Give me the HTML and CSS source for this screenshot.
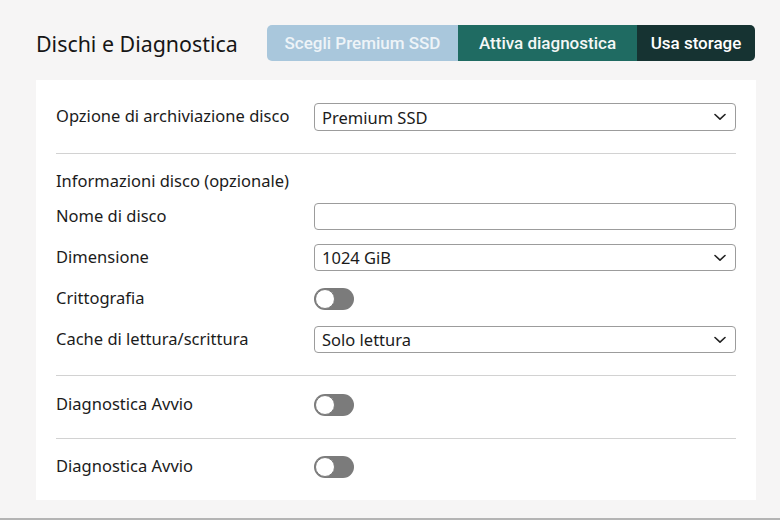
FILE: index.html
```html
<!DOCTYPE html>
<html lang="it">
<head>
<meta charset="utf-8">
<title>Dischi e Diagnostica</title>
<link rel="stylesheet" href="styles.css">
</head>
<body>
<div class="page">
  <header class="header">
    <h1 class="title">Dischi e Diagnostica</h1>
    <div class="steps">
      <span class="step step-1">Scegli Premium SSD</span>
      <span class="step step-2">Attiva diagnostica</span>
      <span class="step step-3">Usa storage</span>
    </div>
  </header>

  <main class="card">
    <section class="section section-first">
      <div class="row">
        <span class="label">Opzione di archiviazione disco</span>
        <div class="select"><span>Premium SSD</span><svg class="chev" viewBox="0 0 12 8" width="12" height="8"><path d="M1 1.5 6 6.2 11 1.5" fill="none" stroke="#222" stroke-width="1.6" stroke-linecap="round" stroke-linejoin="round"/></svg></div>
      </div>
    </section>

    <section class="section section-info">
      <div class="heading">Informazioni disco (opzionale)</div>
      <div class="rows">
        <div class="row">
          <span class="label">Nome di disco</span>
          <div class="input"></div>
        </div>
        <div class="row">
          <span class="label">Dimensione</span>
          <div class="select"><span>1024 GiB</span><svg class="chev" viewBox="0 0 12 8" width="12" height="8"><path d="M1 1.5 6 6.2 11 1.5" fill="none" stroke="#222" stroke-width="1.6" stroke-linecap="round" stroke-linejoin="round"/></svg></div>
        </div>
        <div class="row">
          <span class="label">Crittografia</span>
          <div class="ctl"><span class="toggle"><span class="knob"></span></span></div>
        </div>
        <div class="row">
          <span class="label">Cache di lettura/scrittura</span>
          <div class="select"><span>Solo lettura</span><svg class="chev" viewBox="0 0 12 8" width="12" height="8"><path d="M1 1.5 6 6.2 11 1.5" fill="none" stroke="#222" stroke-width="1.6" stroke-linecap="round" stroke-linejoin="round"/></svg></div>
        </div>
      </div>
    </section>

    <section class="section section-diag">
      <div class="row">
        <span class="label">Diagnostica Avvio</span>
        <div class="ctl"><span class="toggle"><span class="knob"></span></span></div>
      </div>
    </section>

    <section class="section section-last">
      <div class="row">
        <span class="label">Diagnostica Avvio</span>
        <div class="ctl"><span class="toggle"><span class="knob"></span></span></div>
      </div>
    </section>
  </main>
  <div class="footer-line"></div>
</div>
</body>
</html>
```

FILE: styles.css
```css
* { box-sizing: border-box; }
html, body { margin: 0; padding: 0; }
body {
  background: #f6f5f5;
  font-family: "Noto Sans", "Open Sans", sans-serif;
  color: #1b1b1b;
  width: 780px;
  height: 520px;
  overflow: hidden;
}
.page { padding-top: 25px; }
.header {
  display: flex;
  align-items: center;
  justify-content: space-between;
  padding: 0 25px 0 36px;
  height: 36px;
}
.title {
  margin: 0;
  font-size: 21.4px;
  font-weight: 400;
  color: #161616;
}
.steps {
  display: flex;
  height: 36px;
  border-radius: 5px;
  overflow: hidden;
  font-family: Roboto, "Noto Sans", sans-serif;
  font-weight: 500;
  font-size: 17px;
}
.step {
  display: flex;
  align-items: center;
  justify-content: center;
}
.step-1 { width: 191px; background: #a9c7dc; color: #eef4f8; }
.step-2 { width: 179px; background: #1f6b62; color: #f4f7f6; }
.step-3 { width: 118px; background: #163332; color: #ffffff; }

.card {
  margin: 19px 24px 0 36px;
  background: #ffffff;
  padding: 0 20px;
  height: 420px;
}
.section { border-top: 1px solid #d2d2d2; }
.section-first { border-top: none; padding: 23px 0 22px; }
.section-info { padding: 16px 0 22px; }
.section-diag { padding: 15px 0 20px; }
.section-last { padding: 14px 0 0; }

.heading {
  font-size: 16.5px;
  line-height: 22px;
  margin-bottom: 11px;
}
.rows { display: flex; flex-direction: column; gap: 14px; }
.row {
  display: grid;
  grid-template-columns: 258px 1fr;
  align-items: center;
  min-height: 27px;
}
.label { font-size: 16.5px; line-height: 20px; position: relative; top: -1px; }
.select, .input {
  height: 27px;
  border: 1px solid #9c9c9c;
  border-radius: 4px;
  background: #fff;
}
.section-first .select { height: 28px; }
.select {
  display: flex;
  align-items: center;
  justify-content: space-between;
  padding: 0 9px 0 7px;
  font-size: 16.5px;
}
.chev { display: block; }
.ctl { display: flex; align-items: center; height: 27px; }
.toggle {
  width: 40px;
  height: 22px;
  border-radius: 11px;
  background: #7b7b7b;
  display: flex;
  align-items: center;
  padding: 0 1px;
}
.knob {
  width: 20px;
  height: 20px;
  border-radius: 50%;
  background: #fff;
  border: 1.5px solid #7b7b7b;
}
.footer-line {
  margin-top: 18px;
  height: 3px;
  background: #b4b4b4;
}
```
